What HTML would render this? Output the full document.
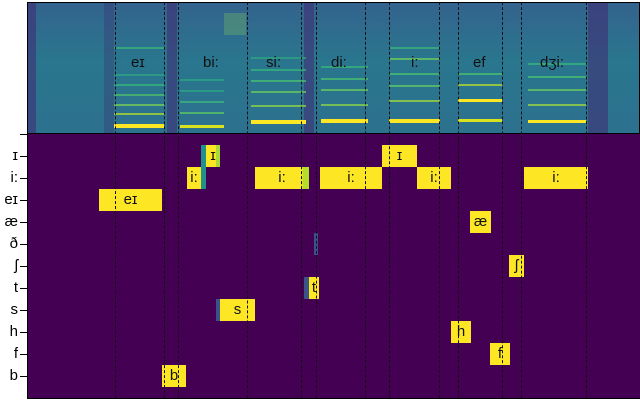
<!DOCTYPE html>
<html><head><style>
body{margin:0;width:640px;height:400px;background:#fff;position:relative;overflow:hidden;font-family:"Liberation Sans","DejaVu Sans",sans-serif}
.a{position:absolute}
#spec{left:27px;top:2px;background:linear-gradient(180deg,#33638d 0%,#2a768e 45%,#2c718e 100%);border:1px solid #000;overflow:hidden;box-sizing:border-box;width:613px;height:132px}
.dk{position:absolute;top:0;height:132px;background:rgba(65,40,115,.55)}
.v{position:absolute;top:0;height:132px}
.b{position:absolute;left:0;right:0;height:2px;background:#7ad151;opacity:.75}
.by{background:#fde725;height:4px;opacity:1}
.sl{position:absolute;top:51px;font-size:15px;color:#111}
#low{left:27px;top:134px;width:613px;height:265px;background:#440154;border-left:1px solid #000;border-bottom:1px solid #000;box-sizing:border-box}
.dl{position:absolute;top:2px;height:396px;width:0;border-left:1px dashed #111}
.bx{position:absolute;background:#fde725;height:22px;font-size:15px;color:#111;text-align:center;line-height:22px}
.yl{position:absolute;right:622px;font-size:15px;color:#000;text-align:right;line-height:15px}
.tk{position:absolute;left:20px;width:7px;height:1px;background:#000}
</style></head><body>
<div id="spec" class="a">
<div class="dk" style="left:0;width:8px"></div>
<div class="dk" style="left:76px;width:10px;background:rgba(60,40,110,.3)"></div>
<div class="dk" style="left:139px;width:10px"></div>
<div class="dk" style="left:276px;width:10px"></div>
<div class="dk" style="left:560px;width:20px"></div>
<div class="a" style="left:196px;top:10px;width:22px;height:22px;background:rgba(120,190,100,.35)"></div>
<div class="v" style="left:86px;width:50px"><div class="b by" style="top:121px"></div><div class="b" style="top:110px;background:#b5de2b"></div><div class="b" style="top:101px"></div><div class="b" style="top:91px;background:#4fbf6a"></div><div class="b" style="top:81px;background:#35b779"></div><div class="b" style="top:71px;background:#2ea581"></div><div class="b" style="top:44px;background:#35b779"></div></div>
<div class="v" style="left:152px;width:44px"><div class="b by" style="top:122px;background:#d8e220;height:3px"></div><div class="b" style="top:109px;background:#5ec962"></div><div class="b" style="top:98px;background:#3db77a"></div><div class="b" style="top:87px;background:#2ea581"></div><div class="b" style="top:76px;background:#2ea581"></div></div>
<div class="v" style="left:223px;width:55px"><div class="b by" style="top:117px"></div><div class="b" style="top:102px;background:#8fd744"></div><div class="b" style="top:88px;background:#6ccd5a"></div><div class="b" style="top:77px;background:#48c16e"></div><div class="b" style="top:66px;background:#35b779"></div><div class="b" style="top:54px;background:#2ea581"></div></div>
<div class="v" style="left:293px;width:47px"><div class="b by" style="top:116px"></div><div class="b" style="top:101px;background:#8fd744"></div><div class="b" style="top:86px;background:#6ccd5a"></div><div class="b" style="top:75px;background:#48c16e"></div><div class="b" style="top:63px;background:#35b779"></div></div>
<div class="v" style="left:361px;width:51px"><div class="b by" style="top:116px"></div><div class="b" style="top:97px;background:#a0da39"></div><div class="b" style="top:82px;background:#5ec962"></div><div class="b" style="top:70px;background:#48c16e"></div><div class="b" style="top:55px;background:#6ccd5a"></div><div class="b" style="top:44px;background:#35b779"></div></div>
<div class="v" style="left:430px;width:44px"><div class="b by" style="top:116px;background:#d8e220;height:3px"></div><div class="b by" style="top:96px;height:3px"></div><div class="b" style="top:81px;background:#b5de2b"></div><div class="b" style="top:70px;background:#48c16e"></div></div>
<div class="v" style="left:500px;width:58px"><div class="b by" style="top:117px;height:3px"></div><div class="b" style="top:101px;background:#a0da39"></div><div class="b" style="top:86px;background:#6ccd5a"></div><div class="b" style="top:73px;background:#48c16e"></div><div class="b" style="top:60px;background:#35b779"></div></div>
<div class="sl" style="left:103px">eɪ</div>
<div class="sl" style="left:175px">bi:</div>
<div class="sl" style="left:238px">si:</div>
<div class="sl" style="left:303px">di:</div>
<div class="sl" style="left:383px">i:</div>
<div class="sl" style="left:445px">ef</div>
<div class="sl" style="left:512px">dʒi:</div>
</div>
<div id="low" class="a"></div>
<div class="a" style="left:201px;top:145px;width:5px;height:44px;background:#21918c"></div>
<div class="bx" style="left:206px;top:145px;width:14px;background:linear-gradient(90deg,#fde725 70%,#a8db34 70%)">ɪ</div>
<div class="bx" style="left:382px;top:145px;width:35px">ɪ</div>
<div class="bx" style="left:187px;top:167px;width:14px">i:</div>
<div class="bx" style="left:255px;top:167px;width:54px;background:linear-gradient(90deg,#fde725 88%,#b5de2b 88%)">i:</div>
<div class="bx" style="left:320px;top:167px;width:62px">i:</div>
<div class="bx" style="left:417px;top:167px;width:34px">i:</div>
<div class="bx" style="left:524px;top:167px;width:64px">i:</div>
<div class="bx" style="left:99px;top:189px;width:63px">eɪ</div>
<div class="bx" style="left:470px;top:211px;width:21px">æ</div>
<div class="a" style="left:314px;top:233px;width:4px;height:22px;background:#3b528b"></div>
<div class="bx" style="left:509px;top:255px;width:15px">ʃ</div>
<div class="a" style="left:304px;top:277px;width:5px;height:22px;background:#3b528b"></div>
<div class="bx" style="left:309px;top:277px;width:10px">t</div>
<div class="a" style="left:216px;top:299px;width:4px;height:22px;background:#3b528b"></div>
<div class="bx" style="left:220px;top:299px;width:35px">s</div>
<div class="bx" style="left:451px;top:321px;width:20px">h</div>
<div class="bx" style="left:490px;top:343px;width:20px">f</div>
<div class="bx" style="left:162px;top:365px;width:24px">b</div>
<div class="dl" style="left:115px"></div><div class="dl" style="left:164px"></div><div class="dl" style="left:178px"></div><div class="dl" style="left:247px"></div><div class="dl" style="left:301px"></div><div class="dl" style="left:316px"></div><div class="dl" style="left:365px"></div><div class="dl" style="left:389px"></div><div class="dl" style="left:439px"></div><div class="dl" style="left:458px"></div><div class="dl" style="left:502px"></div><div class="dl" style="left:521px"></div><div class="dl" style="left:586px"></div>
<div class="yl" style="top:148px">ɪ</div><div class="tk" style="top:156px"></div>
<div class="yl" style="top:170px">i:</div><div class="tk" style="top:178px"></div>
<div class="yl" style="top:192px">eɪ</div><div class="tk" style="top:200px"></div>
<div class="yl" style="top:214px">æ</div><div class="tk" style="top:222px"></div>
<div class="yl" style="top:236px">ð</div><div class="tk" style="top:244px"></div>
<div class="yl" style="top:258px">ʃ</div><div class="tk" style="top:266px"></div>
<div class="yl" style="top:280px">t</div><div class="tk" style="top:288px"></div>
<div class="yl" style="top:302px">s</div><div class="tk" style="top:310px"></div>
<div class="yl" style="top:324px">h</div><div class="tk" style="top:332px"></div>
<div class="yl" style="top:346px">f</div><div class="tk" style="top:354px"></div>
<div class="yl" style="top:368px">b</div><div class="tk" style="top:376px"></div>
<div class="tk" style="top:134px"></div>
</body></html>
